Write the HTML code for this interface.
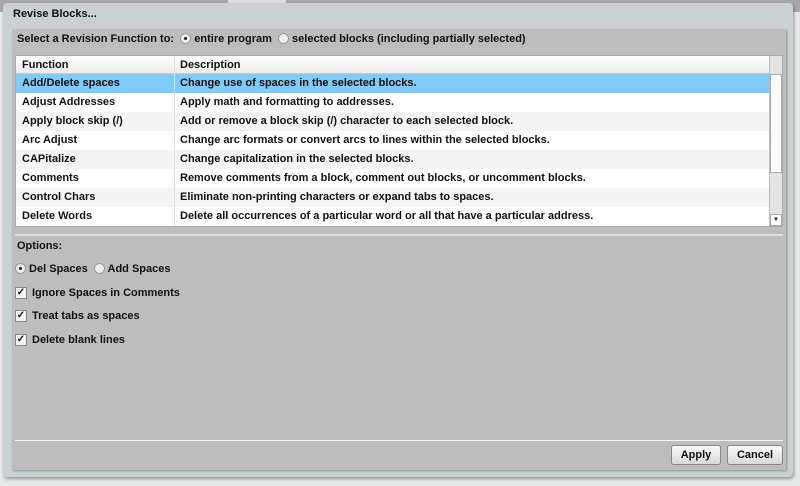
<!DOCTYPE html>
<html><head><style>
*{margin:0;padding:0;box-sizing:border-box}
body{width:800px;height:486px;background:#e6e8e8;font-family:"Liberation Sans",Arial,sans-serif;font-weight:bold;font-size:11px;color:#111;position:relative;overflow:hidden}
.abs{position:absolute}
.frame{left:3px;top:3px;width:790px;height:474px;background:#c9d1d2;border-radius:4px;box-shadow:1px 2px 3px rgba(0,0,0,.35)}
.panel{left:12px;top:29px;width:774px;height:441px;background:#bdbdbd;box-shadow:1px 1px 2px rgba(0,0,0,.3)}
.table{left:15px;top:55px;width:768px;height:172px;background:#fff;border:1px solid #aaa}
.row{position:absolute;left:0;width:753px;height:19px;line-height:19px}
.row span{position:absolute;left:6px}
.row b{position:absolute;left:164px}
.radio{display:inline-block;width:11px;height:11px;border-radius:50%;background:#eee;border:1px solid #999;vertical-align:-2px;position:relative}
.radio.on:after{content:"";position:absolute;left:3px;top:3px;width:3px;height:3px;border-radius:50%;background:#222}
.cb{position:absolute;left:15px;width:12px;height:12px;background:#f2f2f2;border:1px solid #888;font-size:10px;line-height:10px;text-align:center}
.btn{top:445px;height:20px;line-height:19px;text-align:center;border:1px solid #888;border-radius:3px;background:linear-gradient(#fafafa,#d8d8d8);font-size:11px}
</style></head><body>
<div class="abs" style="left:0;top:0;width:800px;height:12px;background:#a8a8a8"></div>
<div class="abs" style="left:228px;top:0;width:58px;height:14px;background:#ddd;color:#bbb;font-size:9px;padding:3px 6px">Lathe Top</div>
<div class="abs frame"></div>
<div class="abs" style="left:13px;top:8px;font-size:11px">Revise Blocks...</div>
<div class="abs panel"></div>
<div class="abs" style="left:17px;top:33px">Select a Revision Function to: &nbsp;<span class="radio on"></span> entire program &nbsp;<span class="radio"></span> selected blocks (including partially selected)</div>
<div class="abs table">
<div class="row" style="top:0;height:18px;background:linear-gradient(#fff,#ececec);border-bottom:1px solid #ccc"><span>Function</span><b>Description</b></div>
<div class="row" style="top:18px;background:#7fcbf8"><span>Add/Delete spaces</span><b>Change use of spaces in the selected blocks.</b></div>
<div class="row" style="top:37px"><span>Adjust Addresses</span><b>Apply math and formatting to addresses.</b></div>
<div class="row" style="top:56px;background:#f4f4f4"><span>Apply block skip (/)</span><b>Add or remove a block skip (/) character to each selected block.</b></div>
<div class="row" style="top:75px"><span>Arc Adjust</span><b>Change arc formats or convert arcs to lines within the selected blocks.</b></div>
<div class="row" style="top:94px;background:#f4f4f4"><span>CAPitalize</span><b>Change capitalization in the selected blocks.</b></div>
<div class="row" style="top:113px"><span>Comments</span><b>Remove comments from a block, comment out blocks, or uncomment blocks.</b></div>
<div class="row" style="top:132px;background:#f4f4f4"><span>Control Chars</span><b>Eliminate non-printing characters or expand tabs to spaces.</b></div>
<div class="row" style="top:151px"><span>Delete Words</span><b>Delete all occurrences of a particular word or all that have a particular address.</b></div>
<div class="abs" style="left:158px;top:0;width:1px;height:170px;background:#ddd"></div>
<div class="abs" style="left:753px;top:0;width:13px;height:170px;background:#e4e4e4;border-left:1px solid #bbb"></div>
<div class="abs" style="left:754px;top:18px;width:12px;height:99px;background:#fafafa;border:1px solid #aaa"></div>
<div class="abs" style="left:754px;top:158px;width:12px;height:12px;background:#fafafa;border:1px solid #aaa;font-size:6px;text-align:center;line-height:10px">▼</div>
</div>
<div class="abs" style="left:15px;top:234px;width:768px;height:2px;background:#e0e0e0"></div>
<div class="abs" style="left:17px;top:240px">Options:</div>
<div class="abs" style="left:15px;top:263px"><span class="radio on"></span> Del Spaces &nbsp;<span class="radio"></span> Add Spaces</div>
<div class="cb" style="top:287px">✓</div><div class="abs" style="left:32px;top:287px">Ignore Spaces in Comments</div>
<div class="cb" style="top:310px">✓</div><div class="abs" style="left:32px;top:310px">Treat tabs as spaces</div>
<div class="cb" style="top:334px">✓</div><div class="abs" style="left:32px;top:334px">Delete blank lines</div>
<div class="abs" style="left:15px;top:440px;width:768px;height:1px;background:#f4f4f4"></div>
<div class="abs btn" style="left:671px;width:50px">Apply</div>
<div class="abs btn" style="left:727px;width:56px">Cancel</div>
</body></html>
